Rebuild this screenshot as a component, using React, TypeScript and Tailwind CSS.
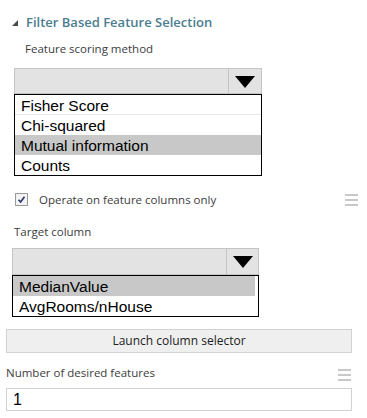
import React from "react";

const Hamburger = ({ className = "" }: { className?: string }) => (
  <div className={"flex flex-col justify-between w-[13px] h-[12px] " + className}>
    <div className="h-[2px] bg-[#c8c8c8]" />
    <div className="h-[2px] bg-[#c8c8c8]" />
    <div className="h-[2px] bg-[#c8c8c8]" />
  </div>
);

const DropTriangle = () => (
  <svg width="20" height="12" viewBox="0 0 20 12">
    <polygon points="0,0 20,0 10,12" fill="#000" />
  </svg>
);

const Dropdown = ({ divider }: { divider: number }) => (
  <div className="flex h-full border border-[#c4c4c4] bg-[#e3e3e3]">
    <div style={{ width: divider }} className="border-r border-[#c4c4c4] h-full" />
    <div className="flex-1 flex items-center justify-center pt-[1px]">
      <DropTriangle />
    </div>
  </div>
);

export default function App() {
  const label = "text-[11.5px] text-[#3c3c3c] leading-[16px]";
  const labelFont = { fontFamily: '"Open Sans", "Noto Sans", sans-serif' };
  const listFont = { fontFamily: '"Liberation Sans", Arial, sans-serif' };
  return (
    <div className="w-[367px] h-[418px] bg-white overflow-hidden">
      {/* Title */}
      <div className="mt-[13px] h-[18px] flex items-center pl-[12px]">
        <svg width="6" height="6" viewBox="0 0 6 6" className="mt-[2px]">
          <polygon points="6,0 6,6 0,6" fill="#4a4a4a" />
        </svg>
        <span
          className="ml-[8px] text-[13px] font-semibold text-[#4b7d90] leading-[18px]"
          style={labelFont}
        >
          Filter Based Feature Selection
        </span>
      </div>

      {/* Feature scoring method */}
      <div className={"mt-[10px] h-[16px] pl-[25px] " + label} style={labelFont}>
        Feature scoring method
      </div>

      <div className="mt-[11px] ml-[14px] w-[248px] h-[26px]">
        <Dropdown divider={214} />
      </div>
      <div className="ml-[14px] w-[248px] h-[82px] border border-black bg-white text-[15.5px] leading-[21px] text-black" style={listFont}>
        <div className="h-[20px] pl-[6px] border-b border-[#e6e6e6]">Fisher Score</div>
        <div className="h-[20px] pl-[6px]">Chi-squared</div>
        <div className="h-[20px] pl-[6px] bg-[#c8c8c8]">Mutual information</div>
        <div className="h-[20px] pl-[6px]">Counts</div>
      </div>

      {/* Checkbox row */}
      <div className="mt-[17px] ml-[15px] w-[343px] h-[13px] flex items-center justify-between">
        <div className="flex items-center">
          <div className="w-[13px] h-[13px] border border-[#9a9a9a] bg-[#f3f3f3] flex items-center justify-center">
            <svg width="9" height="9" viewBox="0 0 9 9">
              <polyline points="1.5,4.8 3.6,7 7.5,1.8" fill="none" stroke="#24356b" strokeWidth="1.6" />
            </svg>
          </div>
          <span className={"ml-[11px] " + label} style={labelFont}>
            Operate on feature columns only
          </span>
        </div>
        <Hamburger />
      </div>

      {/* Target column */}
      <div className={"mt-[18px] h-[16px] pl-[14px] " + label} style={labelFont}>
        Target column
      </div>
      <div className="mt-[8px] ml-[12px] w-[247px] h-[27px]">
        <Dropdown divider={214} />
      </div>
      <div className="ml-[12px] w-[247px] h-[42px] border border-black bg-white text-[15.5px] leading-[21px] text-black" style={listFont}>
        <div className="h-[20px] pl-[6px] mr-[3px] bg-[#c8c8c8]">MedianValue</div>
        <div className="h-[20px] pl-[6px]">AvgRooms/nHouse</div>
      </div>

      {/* Button */}
      <div
        className="mt-[12px] ml-[6px] w-[346px] h-[24px] border border-[#d2d2d2] bg-[#efefef] flex items-center justify-center text-[12px] text-[#222]"
        style={labelFont}
      >
        Launch column selector
      </div>

      {/* Number of desired features */}
      <div className="mt-[12px] ml-[6px] w-[345px] h-[16px] flex items-center justify-between">
        <span className={label} style={labelFont}>
          Number of desired features
        </span>
        <Hamburger className="mt-[4px]" />
      </div>
      <div
        className="mt-[7px] ml-[6px] w-[346px] h-[23px] border border-[#d2d2d2] bg-white flex items-center pl-[6px] text-[16px] text-black"
        style={listFont}
      >
        1
      </div>
    </div>
  );
}
